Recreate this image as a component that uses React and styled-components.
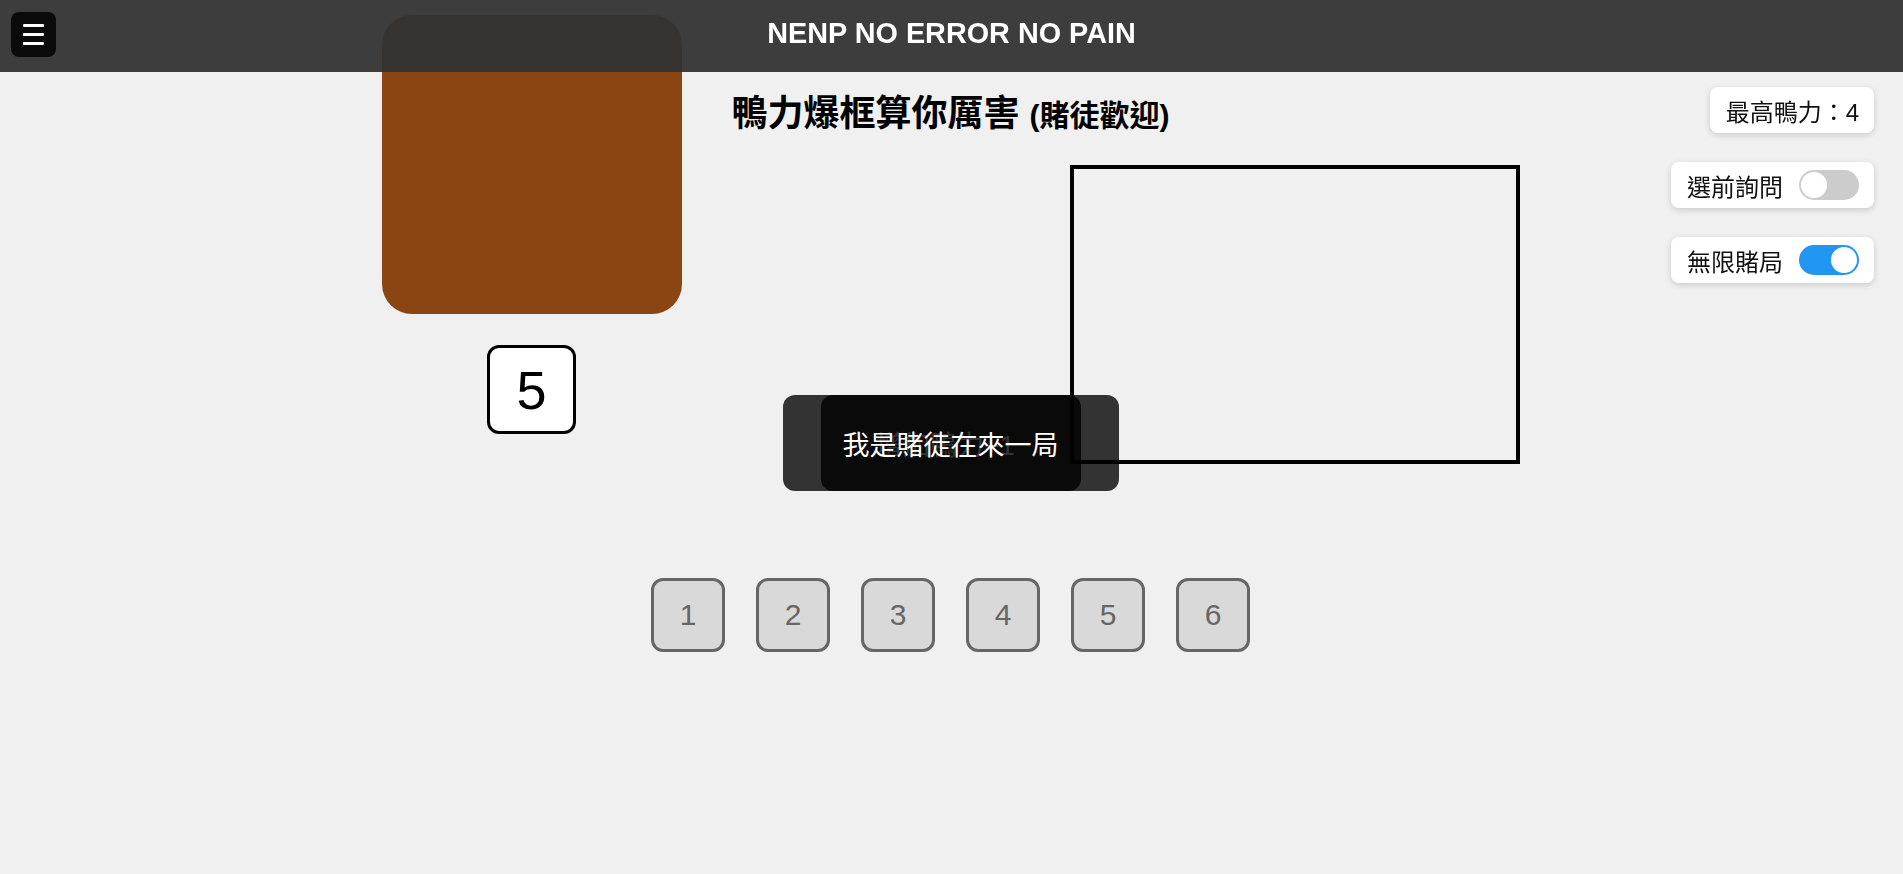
import React, { useState } from 'react';
import styled, { createGlobalStyle } from 'styled-components';

const GlobalStyle = createGlobalStyle`
  html, body {
    margin: 0;
    padding: 0;
    background: #f0f0f0;
  }

  body {
    font-family: "Liberation Sans", Arial, "Noto Sans CJK TC", sans-serif;
    color: #000;
  }

  * {
    box-sizing: border-box;
  }
`;

const Header = styled.header`
  position: fixed;
  top: 0;
  left: 0;
  right: 0;
  height: 72px;
  display: grid;
  grid-template-columns: 1fr auto 1fr;
  align-items: start;
  background: rgba(51, 51, 51, 0.95);
  z-index: 10;
`;

const MenuButton = styled.button`
  justify-self: start;
  margin: 12px 0 0 11px;
  width: 45px;
  height: 45px;
  padding: 0;
  border: none;
  border-radius: 8px;
  background: #0b0b0b;
  display: flex;
  flex-direction: column;
  align-items: center;
  justify-content: center;
  gap: 6px;
  cursor: pointer;

  span {
    display: block;
    width: 21px;
    height: 3px;
    background: #fff;
    border-radius: 1px;
  }
`;

const SiteTitle = styled.h1`
  margin: 17px 0 0;
  color: #fff;
  font-size: 28.8px;
  font-weight: 700;
  line-height: 33px;
  white-space: nowrap;
`;

const Main = styled.main`
  display: flex;
  flex-direction: column;
  align-items: center;
  padding-top: 15px;
  padding-right: 2px;
`;

const Stage = styled.section`
  display: grid;
  width: 1138px;
  grid-template-columns: 300px 101px 287px 49px 401px;
  grid-template-rows: 150px 149px 31px 50px 39px 30px 27px;
`;

const DuckCard = styled.div`
  grid-column: 1 / 2;
  grid-row: 1 / 3;
  background: #8b4513;
  border-radius: 30px;
`;

const Heading = styled.h2`
  grid-column: 1 / -1;
  grid-row: 1 / 2;
  justify-self: center;
  align-self: start;
  margin: 77px 0 0;
  font-size: 36px;
  font-weight: 700;
  line-height: 43px;
  white-space: nowrap;

  small {
    font-size: 30px;
  }
`;

const DropZone = styled.div`
  grid-column: 4 / 6;
  grid-row: 2 / 7;
  border: 4px solid #000;
  z-index: 2;
`;

const CountBox = styled.div`
  grid-column: 1 / 2;
  grid-row: 4 / 6;
  justify-self: center;
  width: 89px;
  height: 89px;
  border: 3px solid #000;
  border-radius: 12px;
  background: #fff;
  display: flex;
  align-items: center;
  justify-content: center;
  font-size: 54px;
`;

const PlayButton = styled.button`
  grid-column: 3 / 5;
  grid-row: 5 / 8;
  position: relative;
  padding: 0 10px 0 0;
  border: none;
  border-radius: 12px;
  background: #333;
  color: #fff;
  font-family: inherit;
  font-size: 27px;
  display: flex;
  align-items: center;
  justify-content: center;
  cursor: pointer;
`;

const GamblerOverlay = styled.span`
  position: absolute;
  top: 0;
  bottom: 0;
  left: 50%;
  width: 260px;
  transform: translateX(-50%);
  border-radius: 12px;
  background: rgba(0, 0, 0, 0.8);
  display: flex;
  align-items: center;
  justify-content: center;
  white-space: nowrap;
`;

const NumberRow = styled.div`
  display: flex;
  justify-content: center;
  gap: 31px;
  margin-top: 87px;
`;

const NumberButton = styled.button`
  width: 74px;
  height: 74px;
  padding: 0;
  border: 3px solid #666;
  border-radius: 12px;
  background: #d9d9d9;
  color: #666;
  font-family: inherit;
  font-size: 30px;
  cursor: pointer;
`;

const SidePanel = styled.aside`
  position: fixed;
  top: 87px;
  right: 29px;
  display: flex;
  flex-direction: column;
  align-items: flex-end;
  gap: 29px;
  z-index: 5;
`;

const InfoCard = styled.div`
  height: 46px;
  padding: 0 15px 0 16px;
  display: flex;
  align-items: center;
  gap: 16px;
  background: #fff;
  border-radius: 8px;
  box-shadow: 0 2px 6px rgba(0, 0, 0, 0.16);
  font-size: 24px;
  color: #111;
  white-space: nowrap;
`;

const Track = styled.span`
  position: relative;
  display: block;
  width: 60px;
  height: 30px;
  border-radius: 15px;
  background: ${(p) => (p.$on ? '#2196f3' : '#ccc')};
  cursor: pointer;

  &::after {
    content: '';
    position: absolute;
    top: 2px;
    left: ${(p) => (p.$on ? '32px' : '2px')};
    width: 26px;
    height: 26px;
    border-radius: 50%;
    background: #fff;
  }
`;

const Toggle = ({ label, initial }) => {
  const [on, setOn] = useState(initial);
  return (
    <InfoCard>
      {label}
      <Track $on={on} onClick={() => setOn(!on)} />
    </InfoCard>
  );
};

export default function App() {
  return (
    <>
      <GlobalStyle />
      <Header>
        <MenuButton aria-label="menu">
          <span />
          <span />
          <span />
        </MenuButton>
        <SiteTitle>NENP NO ERROR NO PAIN</SiteTitle>
      </Header>

      <Main>
        <Stage>
          <DuckCard />
          <Heading>
            鴨力爆框算你厲害 <small>(賭徒歡迎)</small>
          </Heading>
          <CountBox>5</CountBox>
          <PlayButton>
            增加鴨力+1
            <GamblerOverlay>我是賭徒在來一局</GamblerOverlay>
          </PlayButton>
          <DropZone />
        </Stage>

        <NumberRow>
          {[1, 2, 3, 4, 5, 6].map((n) => (
            <NumberButton key={n}>{n}</NumberButton>
          ))}
        </NumberRow>
      </Main>

      <SidePanel>
        <InfoCard>最高鴨力：4</InfoCard>
        <Toggle label="選前詢問" initial={false} />
        <Toggle label="無限賭局" initial={true} />
      </SidePanel>
    </>
  );
}
